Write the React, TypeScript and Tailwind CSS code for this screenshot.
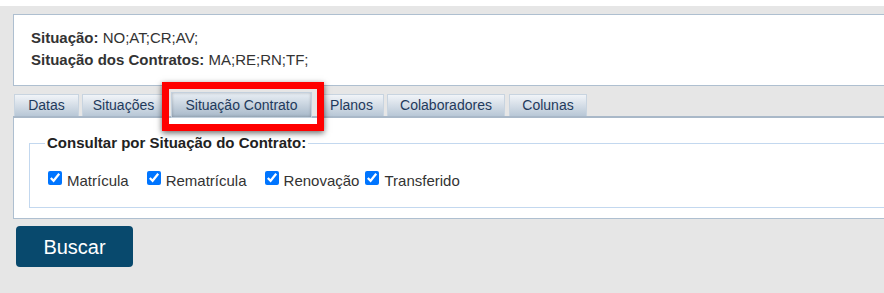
import React from 'react';

const tabs = [
  { label: 'Datas', width: 'w-[65px] mr-[3px]', active: false },
  { label: 'Situações', width: 'w-[83px] mr-[5px]', active: false },
  { label: 'Situação Contrato', width: 'w-[141px] mr-[7px]', active: true },
  { label: 'Planos', width: 'w-[65px] mr-[3px]', active: false },
  { label: 'Colaboradores', width: 'w-[118px] mr-[4px]', active: false },
  { label: 'Colunas', width: 'w-[78px]', active: false },
];

const options = [
  { label: 'Matrícula', gap: 'mr-[18px]' },
  { label: 'Rematrícula', gap: 'mr-[18px]' },
  { label: 'Renovação', gap: 'mr-[6px]' },
  { label: 'Transferido', gap: '' },
];

export default function App() {
  return (
    <div className="min-h-[293px] w-[884px] overflow-hidden bg-[#e6e6e6] font-['Liberation_Sans',Arial,sans-serif] text-[#333]">
      <div className="h-[6px] bg-white" />
      <div className="pl-[13px] pt-[8px]">
        {/* Filters summary */}
        <div className="h-[72px] border border-r-0 border-[#aebfd0] bg-white pl-[17px] pt-[12px] text-[15px] leading-[22px]">
          <div>
            <b>Situação:</b> NO;AT;CR;AV;
          </div>
          <div>
            <b>Situação dos Contratos:</b> MA;RE;RN;TF;
          </div>
        </div>

        {/* Tabs */}
        <div className="relative mt-[8px] flex h-[24px] items-end border-b-2 border-[#a9b8c8] pl-[1px]">
          {tabs.map((tab) =>
            tab.active ? (
              <div key={tab.label} className={`relative -mb-[2px] ml-[1px] flex h-[26px] items-center justify-center border border-[#c3d0dd] bg-gradient-to-b from-[#e9eff5] to-[#a7b8c9] text-[14px] text-[#1f3a5c] shadow-[inset_0_0_3px_rgba(0,0,0,0.25)] ${tab.width}`}>
                {tab.label}
                <div className="absolute -top-[11px] -left-[10px] -right-[13px] -bottom-[14px] border-[7px] border-[#ff0000] shadow-[0_2px_6px_rgba(0,0,0,0.6)]" />
              </div>
            ) : (
              <div key={tab.label} className={`flex h-[22px] items-center justify-center border border-b-0 border-[#c8d4e0] bg-gradient-to-b from-[#f1f4f8] to-[#b8c7d6] text-[14px] text-[#1f3a5c] ${tab.width}`}>
                {tab.label}
              </div>
            )
          )}
        </div>

        {/* Tab content */}
        <div className="h-[101px] border-b border-l border-[#aebfd0] bg-white pl-[15px] pt-[16px]">
          <fieldset className="h-[74px] border border-r-0 border-[#c3d8ef] pl-[18px] pr-0">
            <legend className="ml-[-3px] px-[2px] text-[15px] font-bold leading-[18px] text-[#222]">
              Consultar por Situação do Contrato:
            </legend>
            <div className="mt-[18px] flex items-center text-[15px]">
              {options.map((opt) => (
                <label key={opt.label} className={`flex items-center ${opt.gap}`}>
                  <input type="checkbox" defaultChecked className="relative -top-[3px] mr-[5px] h-[14px] w-[14px] accent-[#0075ff]" />
                  {opt.label}
                </label>
              ))}
            </div>
          </fieldset>
        </div>

        <button className="mt-[7px] ml-[3px] h-[41px] w-[117px] rounded-[4px] bg-[#08496d] text-[20px] text-white">
          Buscar
        </button>
      </div>
    </div>
  );
}
